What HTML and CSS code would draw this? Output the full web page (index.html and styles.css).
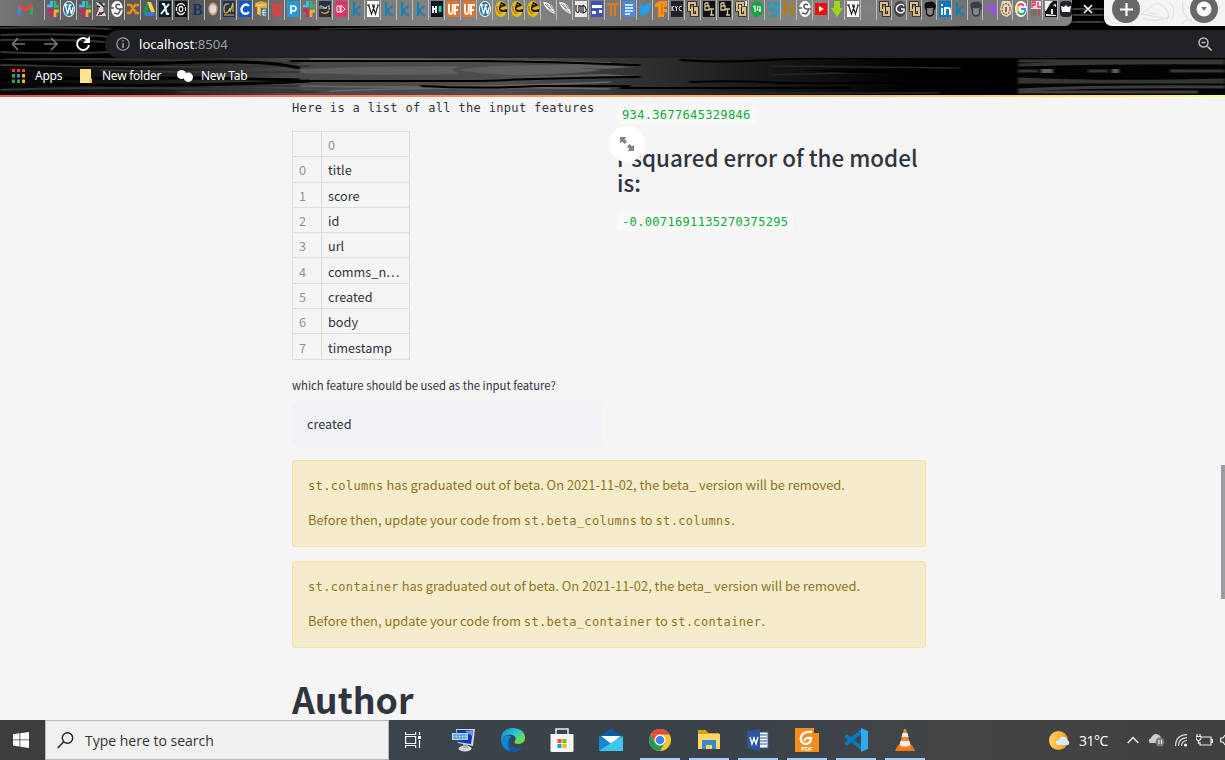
FILE: index.html
```html
<!DOCTYPE html>
<html lang="en">
<head>
<meta charset="utf-8">
<title>localhost:8504</title>
<link rel="stylesheet" href="styles.css">
</head>
<body>
<svg class="defs" aria-hidden="true">
<defs>
<symbol id="slack" viewBox="0 0 12 16"><path d="M4.500 0v6M0 5h5" stroke="#36c5f0" stroke-width="2.600"/><path d="M8 0v7M8 5.500h4" stroke="#2eb67d" stroke-width="2.600"/><path d="M0 9h5M4.500 9v7" stroke="#e01e5a" stroke-width="2.800"/><path d="M7 10h5M8 10v6" stroke="#ecb22e" stroke-width="2.800"/></symbol>
<symbol id="wp" viewBox="0 0 12 16"><ellipse cx="6" cy="8" rx="6" ry="8" fill="#e9f5fa"/><ellipse cx="6" cy="8" rx="5" ry="7" fill="#207196"/><path d="M1.500 4h3M5.500 4h3M2.500 4l2 9 2-8 2 8 1.700-7" fill="none" stroke="#fff" stroke-width="1.300"/></symbol>
<symbol id="globe" viewBox="0 0 12 16"><ellipse cx="6" cy="8" rx="5.800" ry="8" fill="#fff"/><path d="M9 4Q5 2 5 5t3 3-1 5l-4-1M0 7h3M9 8h3" fill="none" stroke="#555" stroke-width="1.500"/></symbol>
<symbol id="kag" viewBox="0 0 12 16"><path d="M3 1v14M9.500 5L3.500 10 9.500 15" fill="none" stroke="#1681b5" stroke-width="2.100"/></symbol>
<symbol id="wiki" viewBox="0 0 12 16"><path fill="#fff" d="M0 0h12v16H0z"/><path d="M0 4h3M5 4h3M10 4h2M1.500 4l3 9L7.500 5M5.500 4l3 9L11 4" fill="none" stroke="#222" stroke-width="1.200"/></symbol>
<symbol id="uf" viewBox="0 0 12 16"><path fill="#f37021" d="M0 0h12v16H0z"/><path d="M2 3v7q0 3 1.800 3t2-3V3M8 14V4h4M8 9h3" fill="none" stroke="#fff" stroke-width="1.900"/></symbol>
<symbol id="ucf" viewBox="0 0 12 16"><ellipse cx="6" cy="8" rx="6" ry="8" fill="#e7b916"/><path d="M6 1q5 1 5 4L7 6l-2 2 3 1 4-1v3H8Q3 11 4 6" fill="#221d0b"/><path d="M5 3l3 1M2 5q-1 6 4 8" stroke="#7d6410" fill="none"/></symbol>
<symbol id="feather" viewBox="0 0 12 16"><path d="M0 1Q10 1 12 13 2 9 0 1z" fill="#f4f4f4"/><path d="M2 3l8 8M4 3l4 5M7 4l3 4" stroke="#777" fill="none" stroke-width=".8"/></symbol>
<symbol id="cu" viewBox="0 0 12 16"><path d="M8 5V2H2v7h3M5 6v8h5V7H8v3" fill="none" stroke="#27231b" stroke-width="3.600"/><path d="M8 5V2H2v7h3M5 6v8h5V7H8v3" fill="none" stroke="#d7bd82" stroke-width="2"/></symbol>
<symbol id="bt" viewBox="0 0 12 16"><path fill="#111" d="M0 0h12v16H0z"/><path d="M2 2v7h4V5H2h3V2H2M6 8h5M8.500 8v6M7 14h4" fill="none" stroke="#cfc39f" stroke-width="1.300"/></symbol>
<symbol id="hair" viewBox="0 0 12 16"><path d="M1 8Q-1 1 4 1q7-2 8 4l-1 4-2-2H3l-1 2z" fill="currentColor"/><path d="M2.500 8v5q3.500 4 7 0V8" fill="#858585" stroke="currentColor" stroke-width="1.300"/></symbol>
</defs>
</svg>

<header class="browser">
  <svg class="theme" viewBox="0 0 1225 95" preserveAspectRatio="none" aria-hidden="true">
    <defs>
      <linearGradient id="fade"><stop offset="0" stop-color="#050505"/><stop offset=".16" stop-color="#1b1b1b"/><stop offset=".28" stop-color="#484848"/><stop offset=".5" stop-color="#4d4d4d"/><stop offset=".63" stop-color="#303030"/><stop offset=".76" stop-color="#171717"/><stop offset=".9" stop-color="#000"/></linearGradient>
      <filter id="soft"><feGaussianBlur stdDeviation="1.500 .4"/></filter>
    </defs>
    <rect width="1225" height="95" fill="#000"/>
    <rect y="58" width="1017" height="37" fill="url(#fade)"/>
    <g filter="url(#soft)" fill="none">
      <g stroke="#363636" stroke-width="2"><path d="M0 28Q50 26 110 29M0 35Q70 33 110 37M0 40q70-1 105 2M0 52Q60 55 130 51M0 60q90-3 300 3M0 65q150 3 310 1M100 70q80 3 200 2M0 90q90-4 300 0M80 86h230M180 92h140"/></g>
      <path d="M0 61q80 6 170 2t130 5M0 80q140-4 300 0M40 84q130 4 270-3" stroke="#000" stroke-width="3"/>
      <path fill="#5e5e5e" d="M300 69l60-2 100-1-8 4 8 4-80 1-80-2zM458 70q30-5 70-4t75 4q-30 4-70 5t-75-5zM505 66l70-2 60 3-30 2zM505 77l70 2 60-3-30-2z"/>
      <path d="M300 86q160 3 310-4M310 59q160 0 300 4M330 91q150-6 280-2" stroke="#686868" stroke-width="1.500"/>
      <path d="M290 61h190q90 1 150 4h10M290 81h190q70-3 150-4h10M420 86q60 3 120 0h90" stroke="#000" stroke-width="2"/>
      <path d="M680 60q50 3 90 0t160-1M690 82q50-2 90 1h220M620 88h230" stroke="#050505" stroke-width="2"/>
      <path d="M770 66q100 1 190 2M770 75q100-3 180-4M690 93h250" stroke="#262626" stroke-width="1.500"/>
      <path d="M800 70l70-1h150v4H850z" fill="#000"/>
    </g>
    <path fill="#030303" d="M1017 58h208v37h-208z"/>
    <g filter="url(#soft)" fill="none">
      <path d="M1018 61h207M1018 65q110-3 207-2M1018 82h207M1018 79q90 4 207 1" stroke="#363636" stroke-width="3"/>
      <path d="M1018 90q80-4 207-3M1018 92h180" stroke="#3c3c3c" stroke-width="3"/>
      <path d="M1018 71h20M1088 71h20M1170 71h55" stroke="#383838" stroke-width="3"/>
      <path d="M1041 71h12M1112 71h7" stroke="#606060" stroke-width="4"/>
      <path d="M1072 9h32M1072 15h32M1072 22h32" stroke="#3a3a3a" stroke-width="2"/>
      <path d="M320 29q130-3 310-2t330-1" stroke="#404040"/>
    </g>
  </svg>

  <div class="strip">
    <div class="tabs">
      <span class="tab gmail"><svg viewBox="0 0 15 12"><path d="M1.500 12V2" stroke="#4285f4" stroke-width="3"/><path d="M13.500 12V2" stroke="#34a853" stroke-width="3"/><path d="M1 2l6.500 5L14 2" fill="none" stroke="#ea4335" stroke-width="3"/></svg></span>
      <span class="tab"><svg><use href="#slack"/></svg></span>
      <span class="tab"><svg><use href="#wp"/></svg></span>
      <span class="tab"><svg><use href="#slack"/></svg></span>
      <span class="tab"><svg viewBox="0 0 12 16"><path d="M1 1l5 2 4-1-2 6 3 7H1l3-7z" fill="#ddd"/><path d="M4 1l5 5M3 14l6-3M2 5l3 1" stroke="#35211f" stroke-width="1.600"/><path d="M4 11h3v3H4z" fill="#9c2531"/></svg></span>
      <span class="tab"><svg><use href="#globe"/></svg></span>
      <span class="tab"><svg viewBox="0 0 12 16"><path d="M0 4h4l5 8h3M12 4H8l-5 8H0" fill="none" stroke="#ef8b17" stroke-width="2.400"/></svg></span>
      <span class="tab"><svg viewBox="0 0 12 16"><path d="M4 1h4l4 10H8z" fill="#ffcf48"/><path d="M4 1l2 5-4 9-2-4z" fill="#159b5c"/><path d="M4 11h8l-2 4H2z" fill="#3979e6"/></svg></span>
      <span class="tab"><svg viewBox="0 0 12 16"><path fill="#071f2b" d="M0 0h12v16H0z"/><path d="M3 3h2l3 10h2M10 3L2 13" stroke="#fff" stroke-width="2" fill="none"/></svg></span>
      <span class="tab"><svg viewBox="0 0 12 16"><path fill="#111" d="M0 0h12v16H0z"/><ellipse cx="6" cy="8" rx="1.800" ry="2.500" stroke="#eee" stroke-width="1.300" fill="none"/><path d="M2 5q4-5 8 0M2 11q4 5 8 0M1.500 6v4M10.500 6v4" fill="none" stroke="#eee" stroke-width="1.300"/></svg></span>
      <span class="tab"><svg viewBox="0 0 12 16"><text x="1" y="14" class="serif">B</text></svg></span>
      <span class="tab"><svg viewBox="0 0 12 16"><ellipse cx="6" cy="8" rx="6" ry="8" fill="#64554b"/><ellipse cx="6" cy="8" rx="4.800" ry="6.500" fill="#c29d70"/><ellipse cx="6" cy="8" rx="3.200" ry="4.500" fill="#d8dce0"/></svg></span>
      <span class="tab"><svg viewBox="0 0 12 16"><path fill="#16365e" d="M0 0h12v16H0z"/><path d="M6 3Q1 2 1 8t4 3l2-4v4l3-9v9M1 14h10" stroke="#f1b82d" fill="none" stroke-width="1.100"/></svg></span>
      <span class="tab"><svg viewBox="0 0 12 16"><path fill="#0757d1" d="M0 0h12v16H0z"/><path d="M10 5Q7 2 4 5q-3 4 0 7 3 2 6-1" fill="none" stroke="#fff" stroke-width="2.300"/></svg></span>
      <span class="tab"><svg viewBox="0 0 12 16"><path fill="#e6a82f" d="M0 2l6-2 6 2v5H6v8l-4-2V6H0z"/><path d="M1 4h10M4 4v9" stroke="#f7e0a5"/><path fill="#397b99" d="M6 7h6v9H6z"/><path d="M11 9H8v5h3M8 11.500h3" stroke="#fff" fill="none"/></svg></span>
      <span class="tab"><svg viewBox="0 0 12 16"><path fill="#d84242" d="M1 0l2 3h6l2-3v12l-3 4H4l-3-4z"/><path d="M1 7h10M4 11h4" stroke="#8b6262" stroke-width="1.500"/></svg></span>
      <span class="tab"><svg viewBox="0 0 12 16"><path fill="#209be0" d="M0 0h12v16H0z"/><path d="M4 13V5h2q3 0 3 2.500T6 10H4" fill="none" stroke="#fff" stroke-width="1.700"/></svg></span>
      <span class="tab"><svg><use href="#slack"/></svg></span>
      <span class="tab"><svg viewBox="0 0 12 16"><path fill="#26313f" d="M0 0h12v16H0z"/><path d="M1 8V5h2v3M4 5l1 3 1-2 1 2 1-3M11 5H9l2 3H9" stroke="#ddd" fill="none" stroke-width=".8"/><path d="M2 11q5 3 8-1" stroke="#f29a20" stroke-width="1.300" fill="none"/></svg></span>
      <span class="tab"><svg viewBox="0 0 12 16"><rect width="12" height="16" rx="3" fill="#e92d66"/><path d="M2 5h3v6H2zM6 4l4 4-4 4z" fill="none" stroke="#fff"/></svg></span>
      <span class="tab"><svg><use href="#kag"/></svg></span>
      <span class="tab"><svg><use href="#wiki"/></svg></span>
      <span class="tab"><svg><use href="#kag"/></svg></span>
      <span class="tab"><svg><use href="#kag"/></svg></span>
      <span class="tab"><svg><use href="#kag"/></svg></span>
      <span class="tab"><svg viewBox="0 0 12 16"><path fill="#091522" d="M0 0h12v16H0z"/><path d="M2 5v7M5 5v7M2 8h3" stroke="#fff" stroke-width="1.800"/><path fill="#15d99b" d="M7.500 5h3v6h-3z"/></svg></span>
      <span class="tab"><svg><use href="#uf"/></svg></span>
      <span class="tab"><svg><use href="#uf"/></svg></span>
      <span class="tab"><svg><use href="#wp"/></svg></span>
      <span class="tab"><svg><use href="#ucf"/></svg></span>
      <span class="tab"><svg><use href="#ucf"/></svg></span>
      <span class="tab"><svg><use href="#ucf"/></svg></span>
      <span class="tab"><svg><use href="#feather"/></svg></span>
      <span class="tab"><svg><use href="#feather"/></svg></span>
      <span class="tab"><svg viewBox="0 0 12 16"><path fill="#e9e9e9" d="M0 0h12v16H0z"/><path d="M1 4v6q2 3 3 0V4M4 5h4M6 5v7M8 4v8q4-1 3-4T8 4" fill="none" stroke="#222" stroke-width="1.200"/></svg></span>
      <span class="tab"><svg viewBox="0 0 12 16"><path fill="#3f51b5" d="M0 0h12v16H0z"/><path fill="#fff" d="M1 4h10v3H1zM1 10h4v3H1zM8 9h3v3H8z"/></svg></span>
      <span class="tab"><svg viewBox="0 0 12 16"><path d="M0 3h12M4 3v12M8 4v11" stroke="#e8790d" stroke-width="1.900"/></svg></span>
      <span class="tab"><svg viewBox="0 0 12 16"><path fill="#438aef" d="M0 0h12v16H0z"/><path d="M2 4h8M2 7h8M2 10h8M2 13h5" stroke="#fff" stroke-width="1.500"/></svg></span>
      <span class="tab"><svg viewBox="0 0 12 16"><path fill="#1da1f2" d="M0 3l5 3q1-5 4-3l3-1-1 4q-1 8-7 8H0l2-2-2-3h2z"/></svg></span>
      <span class="tab"><svg viewBox="0 0 12 16"><path fill="#ff9017" d="M0 3l4-3h8v6h-3v2h3v3H9v5H3V6H0z"/><path d="M7 3v11" stroke="#b86615"/></svg></span>
      <span class="tab"><svg viewBox="0 0 12 16"><path fill="#202229" d="M0 0h12v16H0z"/><path d="M1 5v5M3 5L1 7l2 3M4 5l1 2 2-2M5.500 7v3M11 5q-3 0-3 2.500T11 10" stroke="#eee" stroke-width=".9" fill="none"/></svg></span>
      <span class="tab"><svg><use href="#cu"/></svg></span>
      <span class="tab"><svg><use href="#bt"/></svg></span>
      <span class="tab"><svg><use href="#bt"/></svg></span>
      <span class="tab bright"><svg><use href="#cu"/></svg></span>
      <span class="tab"><svg viewBox="0 0 12 16"><ellipse cx="6" cy="8" rx="6" ry="8" fill="#12a643"/><path d="M2 6l2-1v6M7 5L6 9h4M9 5v6" stroke="#fff" stroke-width="1.200" fill="none"/></svg></span>
      <span class="tab"><svg viewBox="0 0 12 16"><path d="M0 2h3v6q3 3 5-1V2h3v8q0 5-8 5" fill="none" stroke="#15a0c6" stroke-width="2.200"/></svg></span>
      <span class="tab"><svg viewBox="0 0 12 16"><path d="M2 15V2l8 12V1M0 2h4M8 2h4M0 14h4M0 8h12" fill="none" stroke="#a9801e" stroke-width="2"/></svg></span>
      <span class="tab"><svg><use href="#globe"/></svg></span>
      <span class="tab"><svg viewBox="0 0 12 16"><path fill="#f20b0b" d="M0 2h12v12H0z"/><path fill="#fff" d="M4 5l5 3-5 3z"/></svg></span>
      <span class="tab"><svg viewBox="0 0 12 16"><path fill="#9bd51c" d="M3 0h6v7h3l-6 9-6-9h3z"/></svg></span>
      <span class="tab"><svg><use href="#wiki"/></svg></span>
      <span class="tab"><svg viewBox="0 0 12 16"><circle cx="6" cy="8" r="5" fill="#808080"/></svg></span>
      <span class="tab slim"><svg><use href="#cu"/></svg></span>
      <span class="tab slim"><svg viewBox="0 0 12 16"><ellipse cx="6" cy="8" rx="6" ry="8" fill="#454545"/><path d="M10 5Q8 2 5 4 1 6 3 10q4 4 7 0V8H7" fill="none" stroke="#eee" stroke-width="1.500"/></svg></span>
      <span class="tab slim"><svg><use href="#cu"/></svg></span>
      <span class="tab slim black"><svg><use href="#hair"/></svg></span>
      <span class="tab slim"><svg viewBox="0 0 12 16"><path fill="#0876ba" d="M0 0h12v16H0z"/><path d="M3 3v2M3 7v7M6 14V7h3q2 0 2 2v5" fill="none" stroke="#fff" stroke-width="1.800"/></svg></span>
      <span class="tab slim"><svg><use href="#kag"/></svg></span>
      <span class="tab slim slate"><svg><use href="#hair"/></svg></span>
      <span class="tab slim"><svg viewBox="0 0 12 16"><path d="M0 8l4-4 2 6 5-6M7 13l3-4 2 3" fill="none" stroke="#a04cf1" stroke-width="2.200"/></svg></span>
      <span class="tab slim"><svg viewBox="0 0 12 16"><path fill="#e6d7bd" d="M2 0h8l2 5-1 8-4 3-5-2-2-6z"/><ellipse cx="6" cy="8" rx="4" ry="5.500" fill="none" stroke="#8e673c" stroke-width="1.300" stroke-dasharray="2 1"/><path fill="#8b6644" d="M5 6h2v5H5z"/></svg></span>
      <span class="tab slim"><svg viewBox="0 0 12 16"><ellipse cx="6" cy="8" rx="6" ry="8" fill="#fff"/><path d="M9 5Q6 1 3 5" stroke="#ea4335" stroke-width="2" fill="none"/><path d="M3 5q-1 3 0 6" stroke="#fbbc05" stroke-width="2" fill="none"/><path d="M3 11q3 4 6 1" stroke="#34a853" stroke-width="2" fill="none"/><path d="M6 8h4q0 3-1 4" stroke="#4285f4" stroke-width="2" fill="none"/></svg></span>
      <span class="tab slim"><svg viewBox="0 0 12 16"><path fill="#f2d9df" d="M1 0h10v8H1z"/><path d="M2 7V1h3v3H2M8 1v5h3" fill="none" stroke="#d6336c" stroke-width="1.300"/><path d="M2 8v7M6 8v7" stroke="#4c8580" stroke-width="2"/><path d="M4 8v7M9 8v7" stroke="#bd4c4c" stroke-width="2"/></svg></span>
      <span class="tab slim"><svg viewBox="0 0 12 16"><path fill="#111" d="M0 0h12v16H0z"/><path fill="#eee" d="M0 0h8L5 3 1 10H0zM6 8h2v5H6zM1 13l10 1v1H1zM8 4l3-1v3z"/></svg></span>
      <span class="tab slim"><svg viewBox="0 0 12 16"><rect width="12" height="16" rx="4" fill="#22232f"/><path fill="#fff" d="M1 5l3 1 2-2 2 2 3-1-1 6H2z"/></svg></span>
    </div>
    <div class="active"><svg viewBox="0 0 10 10"><path d="M1 1l8 8M9 1L1 9" stroke="#fff" stroke-width="1.600"/></svg></div>
    <div class="tail">
      <svg class="sketch" viewBox="0 0 121 26"><path d="M14 24q5-8 9-1M24 18l5 7M37 14l15-11q15 5 12 16zM44 13l9 1M65 2q9 8 2 18M79 1q-3 15 11 22M38 18q12 5 28-1M3 18q5 6 11 6M78 24q5-6 10-4" fill="none" stroke="#ddd"/></svg>
      <span class="round"><svg viewBox="0 0 12 12"><path d="M6 0v12M0 6h12" stroke="#fff" stroke-width="2"/></svg></span>
      <span class="round"><svg viewBox="0 0 16 16"><circle cx="8" cy="8" r="7.500" fill="#fff"/><path fill="#777" d="M5 6h6l-3 4z"/></svg></span>
    </div>
  </div>

  <div class="toolbar">
    <svg class="nav" viewBox="0 0 16 14"><path d="M14 7H2M7 1L1.500 7 7 13" fill="none" stroke="#777" stroke-width="1.700"/></svg>
    <svg class="nav" viewBox="0 0 16 14"><path d="M1 7h13M8 1l6 6-6 6" fill="none" stroke="#777" stroke-width="1.700"/></svg>
    <svg class="reload" viewBox="0 0 16 16"><path d="M13 4.500A6 6 0 1 0 14 9" fill="none" stroke="#fff" stroke-width="2"/><path d="M15 0v7H8z" fill="#fff"/></svg>
    <div class="address">
      <svg class="info" viewBox="0 0 14 14"><circle cx="7" cy="7" r="6.200" fill="none" stroke="#9a9da1" stroke-width="1.300"/><path d="M7 6v5M7 3v1.600" stroke="#9a9da1" stroke-width="1.500"/></svg>
      <span class="host">localhost</span><span class="port">:8504</span>
      <svg class="zoom" viewBox="0 0 14 14"><circle cx="5.500" cy="5.500" r="4.500" fill="none" stroke="#bbb" stroke-width="1.500"/><path d="M3.500 5.500h4M9 9l4.500 4.500" stroke="#bbb" stroke-width="1.600"/></svg>
    </div>
  </div>

  <nav class="bookmarks">
    <svg class="apps" viewBox="0 0 13 14"><path fill="#ea4335" d="M0 0h3v3H0zM5 0h3v3H5zM10 0h3v3h-3z"/><path fill="#34a853" d="M0 5h3v3.500H0z"/><path fill="#34a853" d="M0 10.500h3V14H0z"/><path fill="#4285f4" d="M5 5h3v3.500H5z"/><path fill="#34a853" d="M5 10.500h3V14H5z"/><path fill="#fbbc05" d="M10 5h3v3.500h-3zM10 10.500h3V14h-3z"/></svg>
    <span class="bm-apps">Apps</span>
    <svg class="folder" viewBox="0 0 12 14"><path fill="#ffe391" d="M0 0h11v9l1 1v4H0z"/><path fill="#edc75f" d="M9 10h3v4H9z"/></svg>
    <span class="bm-folder">New folder</span>
    <svg class="dots" viewBox="0 0 16 12"><circle cx="4.500" cy="4.500" r="4.500" fill="#fff"/><circle cx="11.300" cy="7.300" r="4.700" fill="#fff"/></svg>
    <span class="bm-tab">New Tab</span>
  </nav>
</header>

<main class="page">
  <div class="columns">
    <section class="left">
      <div class="mono intro">Here is a list of all the input features</div>
      <table class="frame">
        <tr><th></th><th>0</th></tr>
        <tr><th>0</th><td>title</td></tr>
        <tr><th>1</th><td>score</td></tr>
        <tr><th>2</th><td>id</td></tr>
        <tr><th>3</th><td>url</td></tr>
        <tr><th>4</th><td>comms_n…</td></tr>
        <tr><th>5</th><td>created</td></tr>
        <tr><th>6</th><td>body</td></tr>
        <tr><th>7</th><td>timestamp</td></tr>
      </table>
      <div class="label">which feature should be used as the input feature?</div>
      <div class="input">created</div>
    </section>
    <section class="right">
      <code class="value">934.3677645329846</code>
      <h3>r squared error of the model<br>is:</h3>
      <code class="value">-0.0071691135270375295</code>
      <span class="expand"><svg viewBox="0 0 14 14"><path fill="#82848c" d="M0 0h6.500L4.500 2 7 4.500 4.500 7 2 4.500l-2 2zM14 14H7.500l2-2L7 9.500 9.500 7 12 9.500l2-2z"/></svg></span>
    </section>
  </div>
  <div class="alert">
    <p><code>st.columns</code> has graduated out of beta. On 2021-11-02, the beta_ version will be removed.</p>
    <p>Before then, update your code from <code>st.beta_columns</code> to <code>st.columns</code>.</p>
  </div>
  <div class="alert">
    <p><code>st.container</code> has graduated out of beta. On 2021-11-02, the beta_ version will be removed.</p>
    <p>Before then, update your code from <code>st.beta_container</code> to <code>st.container</code>.</p>
  </div>
  <h1>Author</h1>
  <span class="scrollbar"></span>
</main>

<footer class="taskbar">
  <div class="start"><svg viewBox="0 0 16 16"><path fill="#fff" d="M0 2.200l6.500-.9v6.200H0zM7.300 1.200L16 0v7.500H7.300zM0 8.300h6.500v6.200L0 13.600zM7.300 8.300H16V16l-8.700-1.300z"/></svg></div>
  <div class="search"><svg viewBox="0 0 17 17"><circle cx="10.500" cy="6" r="5.200" fill="none" stroke="#222" stroke-width="1.400"/><path d="M6.800 9.700L.7 16" stroke="#222" stroke-width="1.400"/></svg><span>Type here to search</span></div>
  <div class="icons">
    <span class="task first"><svg width="16" height="16" viewBox="0 0 16 16" fill="none" stroke="#fff" stroke-width="1.200"><path d="M.6 0v2.500h10V0M.6 16v-2.500h10V16M.6 4.500h10v7H.6zM14.500 0v3M14.500 8v8"/><path fill="#fff" stroke="none" d="M13 4h3v3h-3z"/></svg></span>
    <span class="task"><svg width="24" height="24" viewBox="0 0 24 24"><ellipse cx="13" cy="20.500" rx="6.500" ry="3" fill="#d7d9dc"/><path fill="#aab0b8" d="M11 16h5v4h-5z"/><path fill="#d3d5db" d="M4 1l19 0-2 17-15-3z"/><path fill="#1733ba" d="M5 2l16 0-2 14-13-2z"/><path fill="#7095eb" d="M13 3l8-1-1 6z"/><path fill="#a7d8ee" d="M0 5h16v7H0z"/><path d="M1 7h14M1 10h14M3 6v5M6 6v5M9 6v5M12 6v5" stroke="#388dba" stroke-width=".8"/></svg></span>
    <span class="task"><svg width="24" height="24" viewBox="0 0 24 24"><defs><linearGradient id="edge" x2="1" y2=".6"><stop stop-color="#1686d9"/><stop offset=".6" stop-color="#31c6d0"/><stop offset="1" stop-color="#6ee04d"/></linearGradient></defs><path fill="#1359a7" d="M0 12q1 12 12 12 7 0 10-5-7 3-11-1-5-5 0-9-6-3-11 3z"/><path fill="url(#edge)" d="M0 11Q1 0 12 0q12 1 12 10 0 6-8 6-4-1-2-3 2-5-3-6Q3 6 0 12z"/><path fill="#1686ce" d="M0 12q3-6 10-4-6 8-1 15Q0 20 0 12z"/></svg></span>
    <span class="task"><svg width="24" height="24" viewBox="0 0 24 24"><path d="M6 8V1h12v7" fill="none" stroke="#eee" stroke-width="1.500"/><path fill="#f5f5f5" d="M.5 6h23v17q0 1-1 1h-21q-1 0-1-1z"/><path fill="#f25022" d="M7.500 11h4v4h-4z"/><path fill="#7fba00" d="M12.500 11h4v4h-4z"/><path fill="#00a4ef" d="M7.500 16h4v4h-4z"/><path fill="#ffb900" d="M12.500 16h4v4h-4z"/></svg></span>
    <span class="task"><svg width="24" height="24" viewBox="0 0 24 24"><path fill="#0d5ba8" d="M0 8l12-7 12 7v5H0z"/><path fill="#fff" d="M2 8h20l-10 8z"/><path fill="#1588d3" d="M0 8l12 8v7H0z"/><path fill="#40c5f3" d="M24 8v15H0l12-8z"/></svg></span>
    <span class="task open"><svg width="22" height="22" viewBox="0 0 22 22"><circle cx="11" cy="11" r="11" fill="#f6c72c"/><path fill="#de4b3d" d="M1.500 5.500A11 11 0 0 1 20.500 5.500H11z"/><path fill="#269a51" d="M1.500 5.500A11 11 0 0 0 11 22l5-8.500H6z"/><path fill="#de4b3d" d="M1.500 5.500L6.500 14 11 5.500z"/><circle cx="11" cy="11" r="5.500" fill="#fff"/><circle cx="11" cy="11" r="4.300" fill="#4187e8"/></svg></span>
    <span class="task open"><svg width="22" height="20" viewBox="0 0 22 20"><path fill="#dca20b" d="M0 0h8l2 3h11v5H0z"/><path fill="#ffd766" d="M0 4h22v15H0z"/><path fill="#3789d0" d="M4 10h14v9h-4v-4H8v4H4z"/></svg></span>
    <span class="task open"><svg width="22" height="22" viewBox="0 0 22 22"><path fill="#f7f7f7" stroke="#315a99" d="M11 3h10v16H11z"/><path d="M13 6h7M13 9h7M13 12h7M13 15h7" stroke="#315a99"/><path fill="#2b579a" d="M0 2l13-2v22L0 19z"/><path d="M3 8l2 7 2-6 2 6 2-7" fill="none" stroke="#fff" stroke-width="1.400"/></svg></span>
    <span class="task open"><svg width="24" height="24" viewBox="0 0 24 24"><path fill="#f68b1f" d="M0 0h19l5 5v19H0z"/><path d="M19 0v5h5" fill="#343b40"/><path d="M17 4Q8 3 6 9q-1 6 4 7 6 0 6-6h-4q-3 1-2 3" fill="none" stroke="#fff" stroke-width="2.300"/><text x="6" y="23" class="pdf">PDF</text></svg></span>
    <span class="task open"><svg width="24" height="24" viewBox="0 0 24 24"><path d="M1.500 7.500L18 20M1.500 16.500L18 3" stroke="#087abf" stroke-width="4"/><path fill="#2fa8f1" d="M17 0l7 3v18l-7 3z"/><path fill="#3f464b" d="M17 8v9l-6-4.500z"/></svg></span>
    <span class="task open"><svg width="22" height="24" viewBox="0 0 22 24"><path fill="#ed7815" d="M4 17h14l3 6H1z"/><path fill="#f58a1d" d="M10 1h2l5 18q-6 3-12 0z"/><path fill="#eee" d="M8.600 5h4.800l1.200 4H7.400zM6.500 13h9l1 4q-5.500 3-11 0z"/></svg></span>
  </div>
  <div class="tray">
    <svg class="weather" viewBox="0 0 21 19"><defs><linearGradient id="sun"><stop stop-color="#ffd45c"/><stop offset="1" stop-color="#f69a20"/></linearGradient></defs><circle cx="9.500" cy="9.500" r="9.500" fill="url(#sun)"/><path fill="#d6edff" d="M10 14q-4 0-3-4l3-1q1-4 5-3 3 0 3 3 3 1 2 4-1 2-4 1z"/></svg>
    <span class="temp">31°C</span>
    <svg class="chev" viewBox="0 0 12 8"><path d="M.7 7L6 1.500 11.300 7" fill="none" stroke="#eee" stroke-width="1.400"/></svg>
    <svg class="cloud" viewBox="0 0 17 14"><path fill="#ccc" d="M2 10q-3-3 1-5 3-6 8-3 3 2 2 5l-2 3z"/><circle cx="12" cy="9" r="4.500" fill="#777"/><path d="M11 7v4M13.500 7v4" stroke="#fff"/></svg>
    <svg class="wifi" viewBox="0 0 12 13" fill="none"><path d="M.6 12Q.6 1 12 .6M3.500 12q0-8 8.500-8.400M6.500 12q0-5 5.500-5.500" stroke="#ddd" stroke-width="1.200"/><circle cx="10.500" cy="11" r="1.500" fill="#fff"/></svg>
    <svg class="battery" viewBox="0 0 17 12" fill="none" stroke="#eee" stroke-width="1.200"><path d="M6 3h9v8H4V8M15 5.500h1.500v3H15M1 0v2M4 0v2M0 2.500h5v2q-1 2-2.500 2T0 4.500zM2.500 6.500V10"/></svg>
    <svg class="speaker" viewBox="0 0 5 12"><path d="M5 1L3 4H.7v4H3l2 3" fill="none" stroke="#eee" stroke-width="1.200"/></svg>
  </div>
</footer>
</body>
</html>
```
FILE: styles.css
```css
* { box-sizing: border-box; }
body {
  margin: 0;
  width: 1225px;
  height: 760px;
  overflow: hidden;
  display: flex;
  flex-direction: column;
  background: #f5f5f5;
  font-family: "Noto Sans CJK SC", "Open Sans", sans-serif;
  color: #31333f;
}
svg { display: block; flex: none; }
.defs { position: absolute; width: 0; height: 0; }

.browser { height: 95px; flex: none; position: relative; font-family: "Noto Sans", sans-serif; }
.theme { position: absolute; inset: 0; width: 1225px; height: 95px; }
.strip { position: relative; display: flex; height: 26px; }
.tabs {
  width: 1072px;
  display: flex;
  border-radius: 0 0 7px 0;
  background: linear-gradient(90deg, #777 0, #626262 5%, #555 18%, #777 30%, #858585 45%, #757575 62%, #858585 75%, #737373 90%, #858585);
}
.tab { width: 16px; height: 20px; flex: none; border-left: 1px solid #bbb; padding: 1px 0 0 2px; }
.tab svg { width: 12px; height: 16px; }
.tab.gmail { width: 44px; border: 0; padding: 3px 0 0 18px; }
.tab.gmail svg { width: 15px; height: 12px; }
.tab.slim { width: 15.1px; padding-left: 2px; }
.tab.bright svg { background: linear-gradient(45deg, transparent 45%, #ddd 45%); }
.black { color: #111; }
.slate { color: #354049; }
.serif { font: bold 16px "Liberation Serif", serif; fill: #17365d; }
.active { width: 32px; padding: 4px 0 0 11px; }
.active svg { width: 10px; height: 10px; }
.tail {
  flex: 1;
  display: flex;
  justify-content: space-between;
  padding: 0 8px;
  border-radius: 0 0 0 8px;
  background: #f4f4f4;
  position: relative;
  overflow: hidden;
}
.sketch { position: absolute; inset: 0; width: 121px; height: 26px; }
.round {
  position: relative;
  width: 28px;
  height: 28px;
  margin-top: -5px;
  border-radius: 50%;
  background: #686868;
  display: flex;
  align-items: center;
  justify-content: center;
}
.round:last-child { margin-right: -1px; }
.round svg { width: 13px; height: 13px; }
.round:last-child svg { width: 16px; height: 16px; }

.toolbar { position: relative; display: flex; align-items: center; margin-top: 4px; height: 28px; padding-left: 11px; }
.nav { width: 16px; height: 14px; margin-right: 16px; }
.reload { width: 16px; height: 16px; }
.address {
  margin-left: 14px;
  flex: 1;
  height: 28px;
  border-radius: 14px 0 0 14px;
  background: #202124;
  display: flex;
  align-items: center;
  padding: 0 13px 0 11px;
  font-size: 13.1px;
}
.info { width: 14px; height: 14px; margin-right: 9px; }
.host { color: #fff; }
.port { color: #9aa0a6; }
.zoom { width: 14px; height: 14px; margin-left: auto; }

.bookmarks { position: relative; display: flex; align-items: center; height: 35px; padding-left: 12px; color: #fff; font-size: 12px; letter-spacing: -0.25px; }
.apps { width: 13px; height: 14px; }
.bm-apps { width: 45px; margin-left: 10px; }
.folder { width: 12px; height: 14px; }
.bm-folder { width: 75px; margin-left: 10px; }
.dots { width: 16px; height: 12px; }
.bm-tab { margin-left: 8px; }

.page {
  flex: 1;
  min-height: 0;
  overflow: hidden;
  position: relative;
  border-top: 2px solid;
  border-image: linear-gradient(90deg, #ff4b4b, #ffa062 50%, #ffc973 75%, #fffd80) 1;
  padding: 0 299px 0 292px;
}
.columns { display: grid; grid-template-columns: 310px 309px; column-gap: 15px; height: 348px; }
.intro { height: 34px; line-height: 22px; }
.mono, code { font-family: "DejaVu Sans Mono", monospace; font-size: 12px; letter-spacing: 0.34px; }
.frame { width: 118px; border-collapse: collapse; font-size: 12.7px; line-height: 23px; table-layout: fixed; }
.frame tr { height: 25.3px; }
.frame th, .frame td { padding: 1px 0 0 6px; border: 1px solid #dedede; text-align: left; font-weight: 400; white-space: nowrap; }
.frame th:first-child { width: 29px; }
.frame th { color: #92939a; }
.label { margin-top: 15px; height: 28px; line-height: 20px; font-size: 11.3px; white-space: nowrap; }
.input { height: 42px; line-height: 41px; padding-left: 15px; border-radius: 4px; background: #f0f2f6; font-size: 12.7px; }
.right { position: relative; padding-top: 8px; }
.value { display: block; width: max-content; height: 19px; line-height: 20px; padding: 0 5px; border-radius: 4px; background: #f9f9fa; color: #09ab3b; }
h3 { margin: 21px 0 17px; font-size: 22.4px; line-height: 25px; font-weight: 500; white-space: nowrap; }
.expand {
  position: absolute;
  left: -8px;
  top: 29px;
  width: 36px;
  height: 36px;
  border-radius: 50%;
  background: #fff;
  display: flex;
  align-items: center;
  justify-content: center;
}
.expand svg { width: 14px; height: 14px; }
.alert {
  width: 634px;
  height: 87px;
  margin: 15px 0 14px;
  padding: 13px 15px;
  border: 1px solid #f7e3a1;
  border-radius: 3px;
  background: #f5eccb;
  color: #927322;
  font-size: 12.88px;
}
.alert + .alert { margin-top: 0; }
.alert p { margin: 0 0 13.5px; height: 21.5px; line-height: 21.5px; white-space: nowrap; }
.alert code { line-height: 1; }
h1 { margin: 26px 0 0; font-size: 35.8px; line-height: 48px; font-weight: 700; }
.scrollbar { position: absolute; right: 0; top: 368px; width: 4px; height: 134px; background: #9b9da2; }

.taskbar {
  height: 40px;
  flex: none;
  display: flex;
  font-family: "Open Sans", sans-serif;
  background: linear-gradient(90deg, #3d3d3d 0, #3b444b 32%, #394249 58%, #404549 72%, #444 80%, #404040);
}
.start { width: 45px; padding: 12px 0 0 13px; }
.start svg { width: 16px; height: 16px; }
.search { width: 344px; display: flex; align-items: center; padding-left: 11px; border: 1px solid #b9b9b9; background: #f1f1f1; color: #333; font-size: 14px; }
.search svg { width: 17px; height: 17px; margin-right: 11px; }
.icons { display: flex; margin-left: 1px; }
.task { width: 49px; height: 40px; display: flex; align-items: center; justify-content: center; position: relative; }
.task.first { padding-right: 3px; }
.task.open::after { content: ""; position: absolute; left: 5px; bottom: 0; width: 40px; height: 2px; background: #a6ccf5; }
.pdf { font: bold 6px "Liberation Sans", sans-serif; fill: #fff; }
.tray { flex: 1; display: flex; align-items: center; padding-left: 120px; overflow: hidden; }
.weather { width: 21px; height: 19px; }
.temp { width: 48px; margin-left: 9px; color: #fff; font-size: 14px; letter-spacing: -0.5px; }
.chev { width: 12px; height: 8px; margin-right: 9px; }
.cloud { width: 17px; height: 14px; margin-right: 10px; }
.wifi { width: 12px; height: 13px; margin-right: 9px; }
.battery { width: 17px; height: 12px; margin-right: 7px; }
.speaker { width: 5px; height: 12px; }
```
